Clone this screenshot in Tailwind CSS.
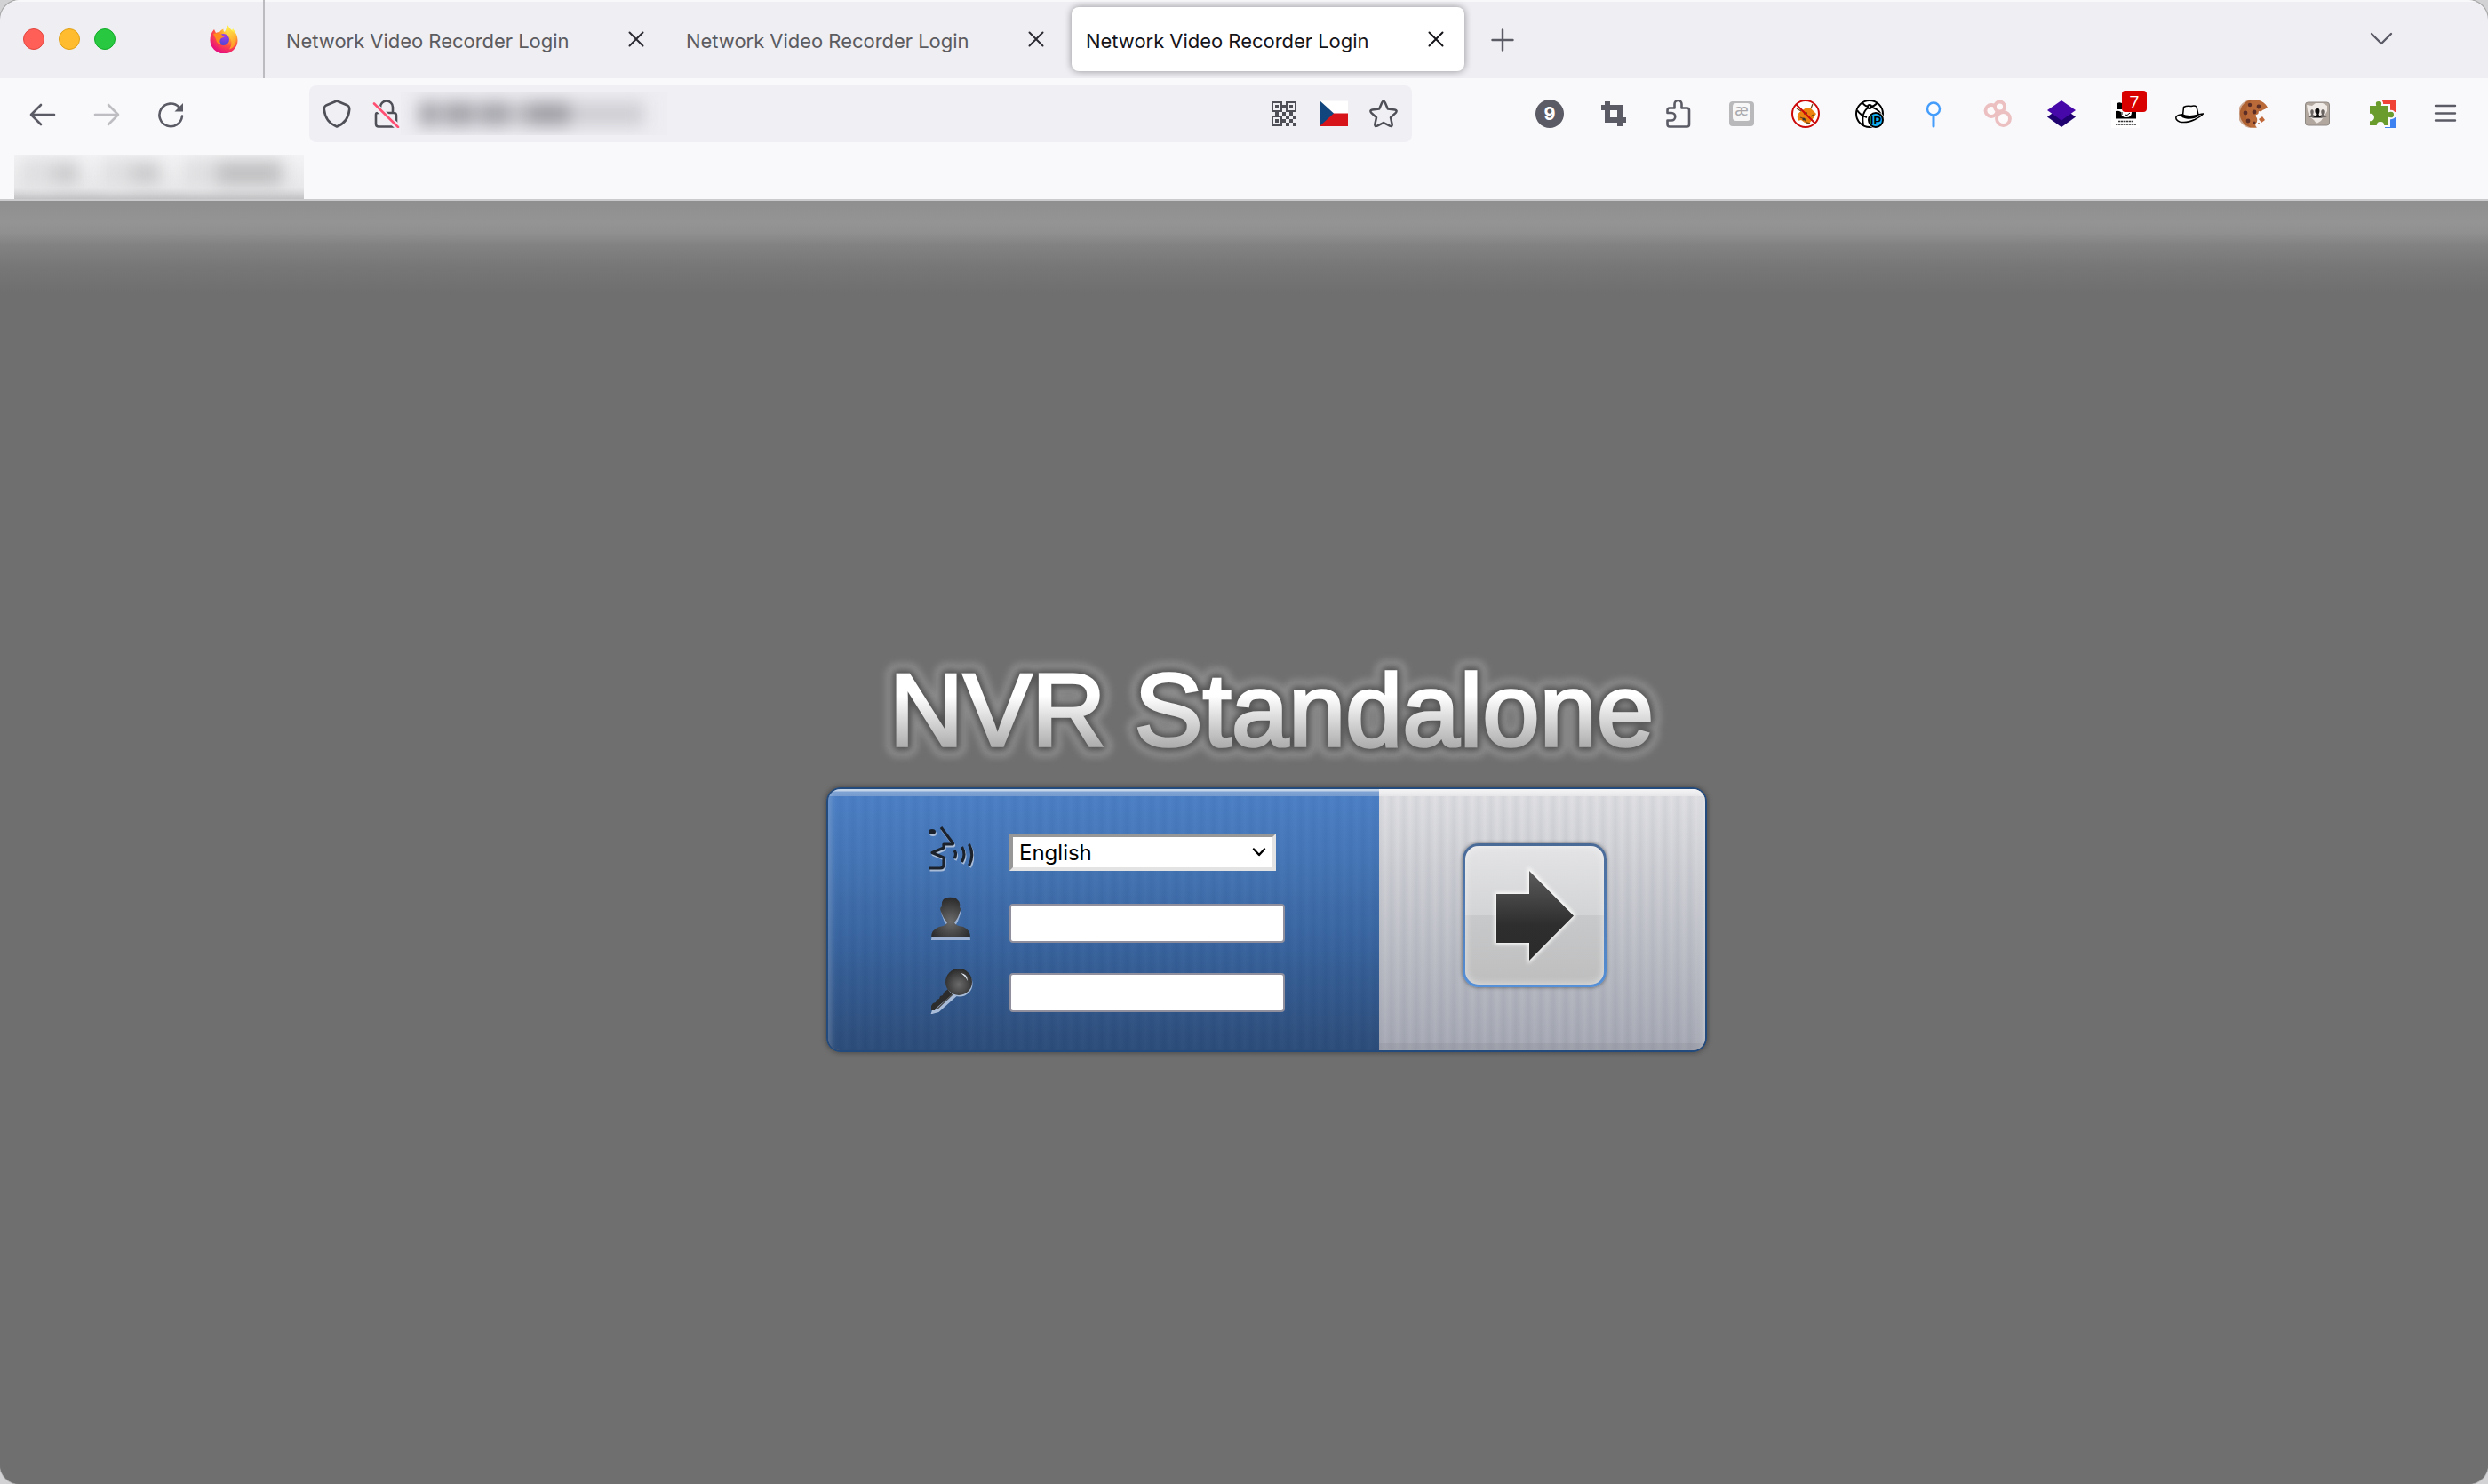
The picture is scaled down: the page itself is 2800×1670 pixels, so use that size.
<!DOCTYPE html>
<html lang="en">
<head>
<meta charset="utf-8">
<title>Network Video Recorder Login</title>
<script src="https://cdn.jsdelivr.net/npm/@tailwindcss/browser@4"></script>
</head>
<body class="bg-[#d2d2d4] font-[Inter,sans-serif] overflow-hidden">
<div class="w-[2800px] h-[1670px] rounded-[22px] overflow-hidden flex flex-col bg-[#6f6f6f] shadow-[0_0_0_1px_#a8a8a8]">

  <!-- Tab strip -->
  <header class="h-[88px] shrink-0 bg-[#efeef3] flex items-center shadow-[inset_0_2px_0_#f8f8fa]">
    <div class="w-[296px] h-full flex items-center pl-[26px]">
      <div class="flex gap-4">
        <span class="size-6 rounded-full bg-[#ff5f57] border border-[#e2463f]"></span>
        <span class="size-6 rounded-full bg-[#febc2e] border border-[#e1a116]"></span>
        <span class="size-6 rounded-full bg-[#28c840] border border-[#12ac28]"></span>
      </div>
      <svg class="ml-[106px] size-8" viewBox="0 0 32 32">
        <defs>
          <radialGradient id="fx" cx="0.75" cy="0.12" r="1"><stop offset="0.1" stop-color="#fff44f"/><stop offset="0.38" stop-color="#ffa02d"/><stop offset="0.62" stop-color="#ff4a45"/><stop offset="0.9" stop-color="#e8127c"/></radialGradient>
          <radialGradient id="fp" cx="0.6" cy="0.2" r="0.8"><stop offset="0" stop-color="#a33ee8"/><stop offset="1" stop-color="#4a46d6"/></radialGradient>
          <linearGradient id="fy" x1="0" y1="0" x2="0.3" y2="1"><stop offset="0" stop-color="#fff44f"/><stop offset="1" stop-color="#ff9a28"/></linearGradient>
        </defs>
        <path fill="url(#fx)" d="M5 5 L7 9 Q9 8 11 8 Q13 5 15.500 4.500 Q15 7 17 8 Q19 3 20.500 0.500 Q21.500 3.500 25 6 Q26 5 26 4 Q31.500 11 31.500 17.500 A15.500 15.200 0 0 1 0.500 17 Q0.500 10 5 5Z"/>
        <path fill="url(#fy)" d="M20.500 0.500 Q21.500 4 26.500 8 Q31 13 29 21 Q27 26 22 27.500 Q27 20 22 13 Q17 8 20.500 0.500Z"/>
        <circle cx="15.500" cy="16.500" r="6.500" fill="url(#fp)"/>
        <path fill="#ff8a1e" d="M4 10 Q10 8 14 11.500 L16.500 13.500 Q13 14.500 12 16 Q10 20 14 22 Q8 22 7 16Z"/>
      </svg>
    </div>
    <div class="w-0.5 h-full bg-[#bcbcc0]"></div>
    <div class="flex h-full items-center text-[22px] text-[#5b5b60]">
      <div class="w-[450px] flex items-center justify-between pl-6 pr-[23px]">
        <svg class="w-[318px] h-8 overflow-visible" fill="currentColor"><text x="0" y="26" textLength="318.500" lengthAdjust="spacing">Network Video Recorder Login</text></svg>
        <svg class="size-[18px] text-[#2b2a33]" viewBox="0 0 18 18" fill="none" stroke="currentColor" stroke-width="2" stroke-linecap="round"><path d="M1.500 1.500l15 15M16.500 1.500l-15 15"/></svg>
      </div>
      <div class="w-[458px] flex items-center justify-between pl-6 pr-[31px]">
        <svg class="w-[318px] h-8 overflow-visible" fill="currentColor"><text x="0" y="26" textLength="318.500" lengthAdjust="spacing">Network Video Recorder Login</text></svg>
        <svg class="size-[18px] text-[#2b2a33]" viewBox="0 0 18 18" fill="none" stroke="currentColor" stroke-width="2" stroke-linecap="round"><path d="M1.500 1.500l15 15M16.500 1.500l-15 15"/></svg>
      </div>
      <div class="w-[442px] h-[72px] rounded-lg bg-white shadow-[0_0_8px_rgba(0,0,0,0.4)] flex items-center justify-between pl-4 pr-[23px] text-[#15141a]">
        <svg class="w-[318px] h-8 overflow-visible" fill="currentColor"><text x="0" y="26" textLength="318.500" lengthAdjust="spacing">Network Video Recorder Login</text></svg>
        <svg class="size-[18px]" viewBox="0 0 18 18" fill="none" stroke="currentColor" stroke-width="2" stroke-linecap="round"><path d="M1.500 1.500l15 15M16.500 1.500l-15 15"/></svg>
      </div>
      <svg class="ml-[30px] size-[26px] mt-0.5" viewBox="0 0 26 26" fill="none" stroke="#5b5b66" stroke-width="2.400" stroke-linecap="round"><path d="M13 1.500v23M1.500 13h23"/></svg>
    </div>
    <svg class="ml-auto mr-[107px] w-[26px] h-4" viewBox="0 0 26 16" fill="none" stroke="#5b5b66" stroke-width="2.400" stroke-linecap="round" stroke-linejoin="round"><path d="M2 2l11 11 11-11"/></svg>
  </header>

  <!-- Navigation toolbar -->
  <nav class="h-20 shrink-0 bg-[#f9f9fb] flex items-center pl-8 pr-8">
    <div class="flex gap-10">
      <svg class="size-8" viewBox="0 0 32 32" fill="none" stroke="#5b5b66" stroke-width="2.600" stroke-linecap="round" stroke-linejoin="round"><path d="M29 17H3M14 6L3 17l11 11"/></svg>
      <svg class="size-8" viewBox="0 0 32 32" fill="none" stroke="#bdbdc2" stroke-width="2.600" stroke-linecap="round" stroke-linejoin="round"><path d="M3 17h26M18 6l11 11-11 11"/></svg>
      <svg class="size-8" viewBox="0 0 32 32" fill="none" stroke="#5b5b66" stroke-width="2.600" stroke-linecap="round"><path d="M29 18.500A12.800 12.800 0 1 1 25.500 8.500"/><path d="M30 4v9.500H20.500z" fill="#5b5b66" stroke="none"/></svg>
    </div>
    <div class="ml-[140px] w-[1241px] h-16 rounded-lg bg-[#f0eff4] flex items-center pl-[15px] pr-4">
      <svg class="size-8" viewBox="0 0 32 32" fill="none" stroke="#4f4f58" stroke-width="2.600" stroke-linejoin="round"><path d="M16 1.500L28 6.500Q30.500 8 30.200 11C29.500 20 25 27 16 30.500C7 27 2.500 20 1.800 11Q1.500 8 4 6.500Z"/></svg>
      <svg class="ml-6 size-8" viewBox="0 0 32 32" fill="none" stroke="#4f4f58" stroke-width="2.600" stroke-linejoin="round"><path d="M9 14V8.500a7 7 0 0 1 14 0V14M6 15h18q3 0 3 3v9q0 3.500-3 3.500H7q-3 0-3-3V17q0-2 2-2"/><path d="M1 5l28 26" stroke="#f0eff4" stroke-width="7"/><path d="M2 4.500L29 31" stroke="#ff4f72" stroke-width="2.600" stroke-linecap="round"/></svg>
      <div class="w-[300px] h-12 bg-[#eeedf2] overflow-hidden flex items-center pl-5">
        <div class="flex blur-[9px]">
          <span class="w-6 h-7 bg-[#a6a6ac] mr-1"></span><span class="w-9 h-7 bg-[#a4a4aa] mr-1"></span><span class="w-9 h-7 bg-[#a6a6ac] mr-1"></span><span class="w-4 h-7 bg-[#bbbbc0]"></span><span class="w-[46px] h-7 bg-[#a1a1a7]"></span><span class="w-[84px] h-7 bg-[#cfcfd4]"></span>
        </div>
      </div>
      <div class="ml-auto flex items-center gap-6">
        <svg class="size-8" viewBox="0 0 32 32" fill="#4f4f58" shape-rendering="crispEdges"><path fill-rule="evenodd" d="M2 2h12v12H2zM4 4v8h8V4zM18 2h12v12H18zM20 4v8h8V4zM2 18h12v12H2zM4 20v8h8v-8z"/><path d="M6 6h4v4H6zM22 6h4v4h-4zM6 22h4v4H6zM14 6h4v4h-4zM6 14h4v4H6zM14 14h4v4h-4zM22 14h4v4h-4zM18 18h4v4h-4zM26 18h4v4h-4zM14 22h4v4h-4zM22 22h4v4h-4zM18 26h4v4h-4zM26 26h4v4h-4z"/></svg>
        <svg class="size-8" viewBox="0 0 32 32"><path d="M0 1.500h32V16H0z" fill="#fff"/><path d="M0 15.500h32V30H0z" fill="#d7141a"/><path d="M0 1l16 14.500L0 30z" fill="#11457e"/></svg>
        <svg class="size-8" viewBox="0 0 32 32" fill="none" stroke="#4f4f58" stroke-width="2.500" stroke-linejoin="round"><path d="M14.300 3.300q1.700-3 3.400 0l3.100 7.200 8 1q3 .8 1 3.300L24 20.200l1.700 7.700q.2 3-2.700 1.800L16 26l-7 3.700q-2.900 1.200-2.700-1.800L8 20.200l-5.800-5.400q-2-2.500 1-3.300l8-1z"/></svg>
      </div>
    </div>
    <div class="ml-auto flex items-center gap-10">
      <svg class="size-8" viewBox="0 0 32 32"><circle cx="16" cy="16" r="16" fill="#5b5b66"/><text x="16" y="23" text-anchor="middle" font-size="20" font-weight="700" fill="#fff">9</text></svg>
      <svg class="size-8" viewBox="0 0 32 32" fill="#5b5b66"><path fill-rule="evenodd" d="M6 2h6v4h14v14h4v6h-4v4h-6v-4H6V12H2V6h4zM12 12v8h8v-8z"/></svg>
      <svg class="size-8" viewBox="0 0 32 32" fill="none" stroke="#5b5b66" stroke-width="2.600" stroke-linejoin="round"><path d="M4.500 15V12Q4.500 9.500 7 9.500h5.500V5a4 4 0 0 1 8 0v4.500h6Q29 9.500 29 12v16q0 2.500-2.500 2.500H7Q4.500 30.500 4.500 28v-4.500h4.500a4 4 0 0 0 0-8.500z"/></svg>
      <svg class="size-8" viewBox="0 0 32 32"><rect x="2" y="2" width="28" height="28" rx="4" fill="#b9b9bc"/><rect x="6" y="4" width="20" height="20" rx="4" fill="#f7f7f8"/><text x="16" y="18" text-anchor="middle" font-size="18" fill="#a9a9ad" font-family="Noto Sans, sans-serif">æ</text></svg>
      <svg class="size-8" viewBox="0 0 32 32"><circle cx="16" cy="16" r="15" fill="#fff"/><path d="M7 21q-1-5 4-8l6-4 5 1 6 6-4 6-4 5-5-1-4-3-4 1z" fill="#ee8410"/><path d="M10 20l5 2 2 4 4 1M6 10l5 3M22 10l2-5M14 16l4-1M22 19l3-2" stroke="#6b4517" stroke-width="1.300" fill="none"/><circle cx="14" cy="22" r="1.600" fill="#333"/><circle cx="16" cy="16" r="15" fill="none" stroke="#cc0a0a" stroke-width="2"/><path d="M5.500 5.500l21 21" stroke="#cc0a0a" stroke-width="2"/></svg>
      <svg class="size-8" viewBox="0 0 32 32" fill="none" stroke="#000" stroke-width="2"><circle cx="16" cy="16" r="15" fill="#fff"/><path d="M8 3.500q3 4.500 8 4.500t9-4.500M16 8Q6 14 9 29M16 8q10 2 13 9M2 12q4 6 11 8"/><circle cx="16" cy="8" r="2" fill="#fff"/><circle cx="23" cy="23" r="9.500" fill="#fff" stroke="none"/><circle cx="23" cy="23" r="8" fill="#14b4f5"/><text x="23" y="28" text-anchor="middle" font-size="13" font-weight="700" fill="#000" stroke="none" font-family="Liberation Sans, sans-serif">IP</text></svg>
      <svg class="size-8" viewBox="0 0 32 32" fill="none" stroke="#459dfb" stroke-width="3" stroke-linecap="round"><circle cx="16" cy="10.500" r="7" fill="#fafcff" stroke-width="2.500"/><path d="M16 18v12"/></svg>
      <svg class="size-8" viewBox="0 0 32 32" fill="#fcfafb" stroke="#ecbfc0" stroke-width="3.800"><circle cx="9" cy="12.500" r="6.500"/><circle cx="18.500" cy="8" r="5.500"/><circle cx="22.500" cy="21.500" r="7.500"/></svg>
      <svg class="size-8" viewBox="0 0 32 32"><path d="M0 19.500L16 8l16 11.500L16 31z" fill="#1f0270"/><path d="M0 12L16 1l16 11-16 11.500z" fill="#4608a8"/></svg>
      <div class="relative size-8">
        <svg class="size-8" viewBox="0 0 32 32"><path fill="#fff" d="M0 0h32v32H0z"/><path d="M6 5q2-3 6-1v7H7z"/><path d="M5 21.500V13q3-1 6 1 0 6 6 6t6-6q4-1 5 0v7.500z"/><path d="M12 14v3M15 17q3 2 6-2" stroke="#000" fill="none"/><path d="M8 24.500h17M5 28h23" stroke="#333" stroke-width="1.600" stroke-dasharray="2.400 0.600"/></svg>
        <span class="absolute left-3 -top-[10px] w-7 h-6 rounded bg-[#d90000] text-white text-[19px] leading-6 text-center font-medium font-['Open_Sans',sans-serif]">7</span>
      </div>
      <svg class="size-8" viewBox="0 0 32 32"><path d="M8.500 18L9.500 8.500Q13 6.500 18 7.500q4-1 6 .5l2 9q4-1 5.500-1Q29 19 22 22.500 12 27 5 25 0 23 1 19.500q2-3 7-2.500z" fill="#fff" stroke="#000" stroke-width="1.500"/><path d="M7.500 16q8 3.500 18 .5l1 2q-6 4-14 3-5-1-6-3z"/></svg>
      <svg class="size-8" viewBox="0 0 32 32"><path d="M19 0A16 16 0 1 0 20 31.500Q18 30 18 27 21 26 20 21q-2-2-1-4 3 0 3-4 3 1 4-1 3-1 6-3Q29 2 19 0z" fill="#b96a38"/><path d="M15 0A16 16 0 0 0 14 32Q6 24 8 12 9 4 15 0z" fill="#a35628" opacity=".5"/><g fill="#5c2e26"><circle cx="12" cy="6" r="2.200"/><circle cx="22" cy="8" r="2.400"/><circle cx="17" cy="14" r="2.400"/><circle cx="7" cy="15" r="2.400"/><circle cx="10" cy="24" r="2.400"/><circle cx="17" cy="26" r="1.600"/></g><path d="M22 22l4-3 3 4-4 3z" fill="#c0683a"/><circle cx="22" cy="27" r="1" fill="#b96a38"/></svg>
      <svg class="size-8" viewBox="0 0 32 32"><rect x="2.500" y="3" width="27" height="26" rx="3" fill="#b3a89f" stroke="#8e8883"/><path d="M4 6l6 1 4-3h8l5 3v6l-3 5-4 6-5 3-3-4-5-4-2-6z" fill="#efeae6"/><path d="M5 20q3-1 4-3-2-5 1-6 3 1 1 6l2 1h6l2-1q-2-5 1-6 3 1 1 6 1 2 4 3z" fill="#6a6562"/><path d="M9 20.500q5-1 5.500-4-3-6 1.500-7 4 1 1.500 7 .5 3 5.500 4z" fill="#0a0a0a"/></svg>
      <svg class="size-8" viewBox="0 0 32 32"><path d="M17 0h15v14H17z" fill="#ef4136"/><path d="M20 20h12v12H20z" fill="#3d82f0"/><path d="M2 6h7q-1-5 4-5 5 0 4 5h8v7q6-1 6 4 0 5-6 4v9h-7q1-4-3-4t-3 4H2v-7q5 1 5-3t-5-3z" fill="#6a9c2d" stroke="#f9f9fb" stroke-width="2"/></svg>
      <svg class="size-8" viewBox="0 0 32 32" stroke="#5b5b66" stroke-width="2.400" stroke-linecap="round"><path d="M5 7h22M5 15.500h22M5 23.500h22"/></svg>
    </div>
  </nav>

  <!-- Bookmarks toolbar -->
  <div class="h-[58px] shrink-0 bg-[#f9f9fb] border-b-2 border-[#cbcbcd] pl-4 pt-1.5">
    <div class="w-[326px] h-[50px] overflow-hidden bg-[linear-gradient(to_bottom,#f3f3f5,#e8e8ea_75%,#c2c2c4)]">
      <div class="flex items-center pl-2 h-[42px] blur-[9px]">
        <span class="w-9 h-8 bg-[#dfdfe1]"></span><span class="w-7 h-6 bg-[#c9c9cb] mr-7"></span>
        <span class="w-8 h-8 bg-[#dfdfe1]"></span><span class="w-8 h-6 bg-[#c9c9cb] mr-7"></span>
        <span class="w-9 h-8 bg-[#dfdfe1]"></span><span class="w-[74px] h-7 bg-[#c0c0c2]"></span>
      </div>
    </div>
  </div>

  <!-- Login page -->
  <main class="flex-1 flex flex-col items-start pl-[930px] bg-[linear-gradient(to_bottom,#8f8f8f_0px,#949494_24px,#909090_36px,#828282_50px,#777777_74px,#6f6f6f_104px,#6f6f6f_100%)]">
    <h1 class="mt-[494px] ml-[46px] w-[920px] h-[150px]">
      <svg class="w-[920px] h-[150px] overflow-visible" font-family="Liberation Sans, Arial, sans-serif" font-size="115">
        <defs>
          <linearGradient id="title" gradientUnits="userSpaceOnUse" x1="0" y1="38" x2="0" y2="122"><stop offset="0.300" stop-color="#fff"/><stop offset="1" stop-color="#ababab"/></linearGradient>
          <filter id="soft" x="-10%" y="-30%" width="120%" height="160%"><feGaussianBlur stdDeviation="3.500"/></filter>
        </defs>
        <text x="25" y="119" textLength="860" lengthAdjust="spacing" fill="none" stroke="#8b8b8b" stroke-width="27" stroke-linejoin="round" filter="url(#soft)" aria-hidden="true">NVR Standalone</text>
        <text x="25" y="119" textLength="860" lengthAdjust="spacing" fill="none" stroke="#525252" stroke-width="11" stroke-linejoin="round" filter="url(#soft)" aria-hidden="true">NVR Standalone</text>
        <text x="25" y="119" textLength="860" lengthAdjust="spacing" fill="url(#title)" stroke="url(#title)" stroke-width="3.600">NVR Standalone</text>
      </svg>
    </h1>
    <form class="mt-4 w-[991px] h-[298px] rounded-[16px] border-2 border-[#234a7c] overflow-hidden flex shadow-[0_0_6px_rgba(0,0,0,0.45)]">
      <div class="w-[620px] h-full bg-[linear-gradient(to_bottom,#c3d3e8_0px,#c3d3e8_2px,#7fa3d3_3px,#769ccf_8px,transparent_8px),repeating-linear-gradient(to_right,rgba(0,20,60,0.035)_0px,rgba(255,255,255,0.015)_7px,rgba(0,20,60,0.035)_14px),linear-gradient(to_bottom,#4b80c7,#4474b4_30%,#38649f_58%,#2c4c79)] shadow-[inset_8px_0_5px_-4px_rgba(255,255,255,0.18)] flex flex-col pt-[43px] pl-[112px]">
        <div class="flex items-center gap-10 h-[56px]">
          <svg class="size-[52px] -mt-2" viewBox="0 0 52 52" fill="none"><defs><g id="talk"><path d="M15 2L28.500 20Q29 21 27 21H18v4L5 30.500l13 5.500v8q0 4-4 4H1.500" stroke-width="3.200" stroke-linejoin="round"/><path d="M30 28q3 4 0 9M38.500 24q5 8.500 0 17M46.500 21q6.500 12 0 24" stroke-width="3.200"/></g></defs><use href="#talk" stroke="#a9bcd8" transform="translate(1 2)"/><ellipse cx="6" cy="9" rx="4" ry="3" fill="#a9bcd8"/><use href="#talk" stroke="#1c222c"/><ellipse cx="5" cy="7" rx="4" ry="3" fill="#1c222c"/></svg>
          <div class="relative w-[300px] h-[42px] bg-white border-4 border-t-[#979797] border-l-[#979797] border-b-[#e3e3e3] border-r-[#e3e3e3] flex items-center justify-between pl-[7px] pr-[7px] text-[24px] leading-none text-black">
            <span class="pt-0.5">English</span>
            <svg class="w-4 h-3" viewBox="0 0 16 12" fill="none" stroke="#000" stroke-width="2.400" stroke-linecap="round" stroke-linejoin="round"><path d="M2 2.500l6 6.500 6-6.500"/></svg>
          </div>
        </div>
        <div class="mt-[24px] flex items-center gap-10 h-[56px]">
          <svg class="size-[52px] -mt-2" viewBox="0 0 52 52"><defs><radialGradient id="dk" cx="0.5" cy="0.6" r="0.6"><stop offset="0" stop-color="#6b6b6b"/><stop offset="1" stop-color="#292929"/></radialGradient></defs><path d="M4 45q0-9 9-11 8-1 9-5-4-5-6-12-2-5 1-6-1-9 5-10 9-1 12 3 3 2 2 8 2 1 0 6-2 7-5 11 1 4 9 5 8 2 8 11z" fill="#9fb4d4" transform="translate(0 4)"/><path d="M4 46q0-9 9-12 8-1 9-5-5-5-7-12-2-5 1-6-1-9 6-10 9-1 12 3 3 2 2 8 2 1 0 6-2 7-6 11 1 4 10 5 8 3 8 12z" fill="url(#dk)"/></svg>
          <input type="text" aria-label="User" class="w-[310px] h-11 bg-white border-2 border-[#8f8f9d] rounded">
        </div>
        <div class="mt-[22px] flex items-center gap-10 h-[56px]">
          <svg class="size-[52px] -mt-1" viewBox="0 0 52 52"><path d="M25 28L7 45l-2 6 7-2 19-17z" fill="#a9bcd8" stroke="#a9bcd8" stroke-width="2"/><path d="M23 24L18 28l-1 3-3 1-1 3-3 1-1 3-3 1-2 3v5h4l2-3 19-16z" fill="#2c2c2c"/><path d="M28 30L10 47" stroke="#4a4a4a" stroke-width="1.500"/><circle cx="36" cy="18" r="14.500" fill="#a9bcd8"/><circle cx="35" cy="16" r="15" fill="url(#dk)"/><path d="M37 6q8 1 8 9-3-6-8-9z" fill="#dfe6f0"/></svg>
          <input type="password" aria-label="Password" class="w-[310px] h-11 bg-white border-2 border-[#8f8f9d] rounded">
        </div>
      </div>
      <div class="flex-1 h-full bg-[linear-gradient(to_bottom,#f5f5f6_0px,#e6e6e9_8px,transparent_8px,transparent_286px,rgba(140,140,150,0.3)_286px),repeating-linear-gradient(to_right,rgba(120,130,150,0.1)_0px,rgba(255,255,255,0.06)_7px,rgba(120,130,150,0.1)_14px),linear-gradient(to_bottom,#e0e0e3,#a3a6b1)] shadow-[inset_-8px_0_6px_-4px_rgba(255,255,255,0.3)] pt-[61px] pl-[94px]">
        <button type="button" aria-label="Log in" class="w-[162px] h-[162px] rounded-[18px] p-[3px] bg-linear-to-b from-[#4a6a96] to-[#5590d8] shadow-[0_0_4px_rgba(0,0,0,0.5)]">
          <span class="flex size-full items-center justify-center rounded-[15px] bg-[linear-gradient(to_bottom,#e4e4e6,#d3d4d5_50%,#c8c9ca_50%,#bebebf)] shadow-[inset_0_0_10px_rgba(255,255,255,0.6)]">
            <svg class="w-[90px] h-[106px] overflow-visible" viewBox="0 0 90 106"><defs><linearGradient id="ar" x1="0" y1="0" x2="0" y2="1"><stop offset="0" stop-color="#5c5c5c"/><stop offset="0.600" stop-color="#2e2e2e"/><stop offset="1" stop-color="#2b2b2b"/></linearGradient><filter id="gl" x="-20%" y="-20%" width="140%" height="140%"><feGaussianBlur stdDeviation="2"/></filter></defs><path d="M2 29h37V2l50 51-50 51V84H2z" fill="#fff" stroke="#fff" stroke-width="3" filter="url(#gl)"/><path d="M2 29h37V3l50 50.500-50 50.500V84H2z" fill="url(#ar)"/></svg>
          </span>
        </button>
      </div>
    </form>
  </main>
</div>
</body>
</html>
